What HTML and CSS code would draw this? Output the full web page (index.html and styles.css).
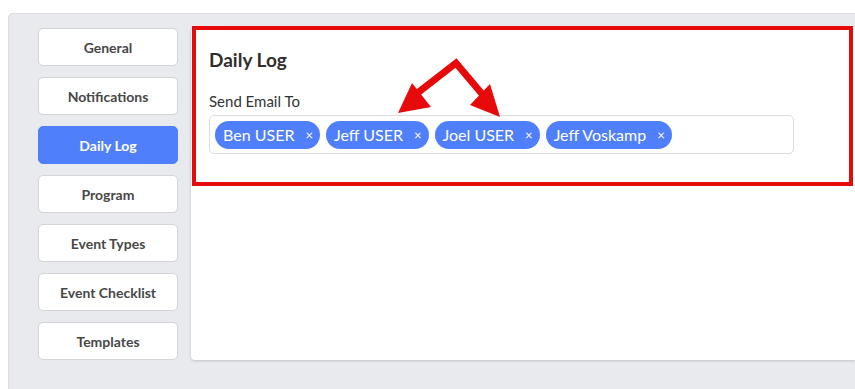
FILE: index.html
```html
<!DOCTYPE html>
<html lang="en">
  <head>
    <meta charset="UTF-8" />
    <meta name="viewport" content="width=device-width, initial-scale=1.0" />
    <title>Settings | Daily Log</title>
    <link rel="stylesheet" href="styles.css">
  </head>
  <body>
    <div class="page">
      <div class="panel">
        <!-- settings tabs -->
        <div class="side--menu">
          <a class="tab">General</a>
          <a class="tab">Notifications</a>
          <a class="tab active">Daily Log</a>
          <a class="tab">Program</a>
          <a class="tab">Event Types</a>
          <a class="tab">Event Checklist</a>
          <a class="tab">Templates</a>
        </div>

        <div class="card">
          <h2 class="card--title">Daily Log</h2>
          <label class="field--label">Send Email To</label>
          <div class="tag--input">
            <span class="tag">Ben USER <span class="tag--x">&times;</span></span>
            <span class="tag">Jeff USER <span class="tag--x">&times;</span></span>
            <span class="tag">Joel USER <span class="tag--x">&times;</span></span>
            <span class="tag">Jeff Voskamp <span class="tag--x">&times;</span></span>
          </div>
        </div>
      </div>
    </div>

    <!-- screenshot annotation drawn on top -->
    <svg class="markup" width="855" height="389" viewBox="0 0 855 389">
      <rect x="194" y="28" width="657" height="156" fill="none" stroke="#e60a0a" stroke-width="4" />
      <polyline points="411,98 456,63 488,101" fill="none" stroke="#e60a0a" stroke-width="7" stroke-linejoin="miter" />
      <polygon points="398,113 412,83 431,107" fill="#e60a0a" />
      <polygon points="500,117 490,84 470,105" fill="#e60a0a" />
    </svg>
  </body>
</html>
```

FILE: styles.css
```css
* {
  box-sizing: border-box;
  margin: 0;
  padding: 0;
}
body {
  background: #fff;
  font-family: "Lato", "Liberation Sans", sans-serif;
  color: #333;
  overflow: hidden;
}
.page {
  padding: 13px 0 0 8px;
  height: 389px;
}
.panel {
  display: flex;
  align-items: flex-start;
  gap: 13px;
  height: 100%;
  padding: 15px 0 0 30px;
  background: #e9eaee;
  border-top-left-radius: 5px;
  box-shadow: inset 1px 1px 0 #dcdde2;
}
.side--menu {
  display: flex;
  flex-direction: column;
  gap: 11px;
  width: 140px;
  flex-shrink: 0;
}
.tab {
  display: flex;
  align-items: center;
  justify-content: center;
  height: 38px;
  background: #fff;
  border: 1px solid #d3d4d8;
  border-radius: 5px;
  font-size: 14px;
  font-weight: 700;
  color: #474747;
}
.tab.active {
  background: #507ffc;
  border-color: #507ffc;
  color: #fff;
}
.card {
  flex: 1;
  height: 333px;
  margin-top: -1px;
  background: #fff;
  border-radius: 4px 0 0 4px;
  box-shadow: 0 1px 3px rgba(0, 0, 0, 0.18);
  padding: 21px 18px 0 18px;
}
.card--title {
  font-size: 19px;
  line-height: 24px;
  font-weight: 700;
  color: #2f2f2f;
}
.field--label {
  display: block;
  margin-top: 19px;
  font-size: 15px;
  line-height: 20px;
  color: #333;
}
.tag--input {
  display: flex;
  align-items: center;
  gap: 6px;
  width: 585px;
  height: 39px;
  margin-top: 4px;
  padding: 0 5px;
  border: 1px solid #dcdcdc;
  border-radius: 5px;
}
.tag {
  display: inline-flex;
  align-items: center;
  height: 28px;
  padding: 0 7px 0 8px;
  background: #507ffc;
  color: #fff;
  border-radius: 14px;
  font-size: 16px;
  white-space: nowrap;
}
.tag--x {
  margin-left: 11px;
  font-size: 13px;
}
.markup {
  position: absolute;
  top: 0;
  left: 0;
  pointer-events: none;
}
```
